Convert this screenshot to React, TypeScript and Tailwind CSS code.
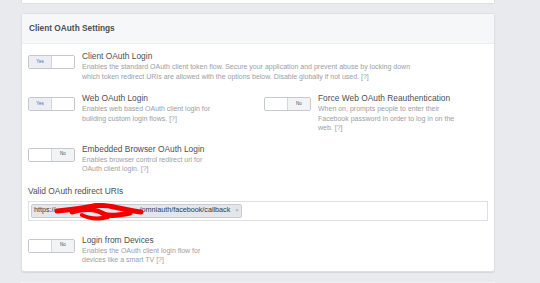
function Toggle({ on }: { on: boolean }) {
  return (
    <div className="flex w-[47px] h-[14px] shrink-0 mt-[4px] border border-[#c4c7cc] rounded-[2px] overflow-hidden bg-white">
      <div
        className={`flex-1 flex items-center justify-center border-r border-[#d3d6db] ${
          on ? 'bg-[#eceef3]' : 'bg-white'
        }`}
      >
        {on && <span className="text-[4.5px] text-[#4267b2] leading-none">Yes</span>}
      </div>
      <div className={`flex-1 flex items-center justify-center ${on ? 'bg-white' : 'bg-[#f2f3f5]'}`}>
        {!on && <span className="text-[4.5px] text-[#4b4f56] leading-none">No</span>}
      </div>
    </div>
  );
}

function Setting({ on, title, lines }: { on: boolean; title: string; lines: string[] }) {
  return (
    <div className="flex items-start">
      <Toggle on={on} />
      <div className="ml-[7px]">
        <p className="text-[8.4px] leading-[11px] text-[#4b4f56]">{title}</p>
        {lines.map((l) => (
          <p key={l} className="text-[7px] leading-[9.5px] text-[#9a9ea6] whitespace-nowrap">
            {l}
          </p>
        ))}
      </div>
    </div>
  );
}

export default function App() {
  return (
    <div className="w-[540px] h-[283px] bg-[#e9eaed] overflow-hidden font-['Liberation_Sans',Arial,sans-serif]">
      <div className="ml-[21px] w-[474px] h-[4px] bg-white border-x border-b border-[#dddfe2] rounded-b-[2px]" />

      <div className="ml-[21px] mt-[9px] w-[474px] bg-white border border-[#dddfe2] rounded-[3px] shadow-[0_1px_1px_rgba(0,0,0,0.08)]">
        <div className="h-[30px] bg-[#f6f7f9] border-b border-[#eceef1] flex items-center px-[7px]">
          <span className="text-[8.3px] font-bold text-[#4b4f56]">Client OAuth Settings</span>
        </div>

        <div className="px-[6px] pt-[7px] pb-[6px]">
          <Setting
            on
            title="Client OAuth Login"
            lines={[
              'Enables the standard OAuth client token flow. Secure your application and prevent abuse by locking down',
              'which token redirect URIs are allowed with the options below. Disable globally if not used.  [?]',
            ]}
          />

          <div className="flex mt-[12px]">
            <div className="w-[236px]">
              <Setting
                on
                title="Web OAuth Login"
                lines={['Enables web based OAuth client login for', 'building custom login flows.  [?]']}
              />
            </div>
            <Setting
              on={false}
              title="Force Web OAuth Reauthentication"
              lines={[
                'When on, prompts people to enter their',
                'Facebook password in order to log in on the',
                'web.  [?]',
              ]}
            />
          </div>

          <div className="mt-[11px]">
            <Setting
              on={false}
              title="Embedded Browser OAuth Login"
              lines={['Enables browser control redirect uri for', 'OAuth client login.  [?]']}
            />
          </div>

          <p className="mt-[12px] text-[8.4px] leading-[11px] text-[#4b4f56]">Valid OAuth redirect URIs</p>
          <div className="mt-[4px] w-[460px] h-[20px] border border-[#dddfe2] bg-white flex items-center px-[2px]">
            <div className="relative flex items-center h-[14px] px-[2px] bg-[#e4e6eb] border border-[#c9ccd1] rounded-[2px] text-[7.2px] text-[#333b47]">
              <span>https://</span>
              <span className="inline-block w-[84px]" />
              <span>/omniauth/facebook/callback</span>
              <span className="ml-[5px] text-[6px] text-[#9a9ea6]">×</span>
              <svg className="absolute left-[22px] top-[-3px]" width="90" height="20" viewBox="0 0 90 20">
                <path
                  d="M3 9 C14 8 24 7 34 5 C44 3 52 3 60 5 C70 7 78 9 87 10"
                  stroke="#f20000"
                  strokeWidth="5"
                  fill="none"
                  strokeLinecap="round"
                />
                <path
                  d="M18 10 C30 7 40 6 50 12 C56 15 66 13 76 11"
                  stroke="#f20000"
                  strokeWidth="5"
                  fill="none"
                  strokeLinecap="round"
                />
                <path
                  d="M28 13 C38 18 46 17 54 15"
                  stroke="#f20000"
                  strokeWidth="4"
                  fill="none"
                  strokeLinecap="round"
                />
                <path
                  d="M36 4 C42 2 48 2 54 4"
                  stroke="#f20000"
                  strokeWidth="3"
                  fill="none"
                  strokeLinecap="round"
                />
              </svg>
            </div>
          </div>

          <div className="mt-[14px]">
            <Setting
              on={false}
              title="Login from Devices"
              lines={['Enables the OAuth client login flow for', 'devices like a smart TV [?]']}
            />
          </div>
        </div>
      </div>

      <div className="ml-[21px] mt-[10px] w-[474px] h-[10px] bg-[#f1f2f4]" />
    </div>
  );
}
